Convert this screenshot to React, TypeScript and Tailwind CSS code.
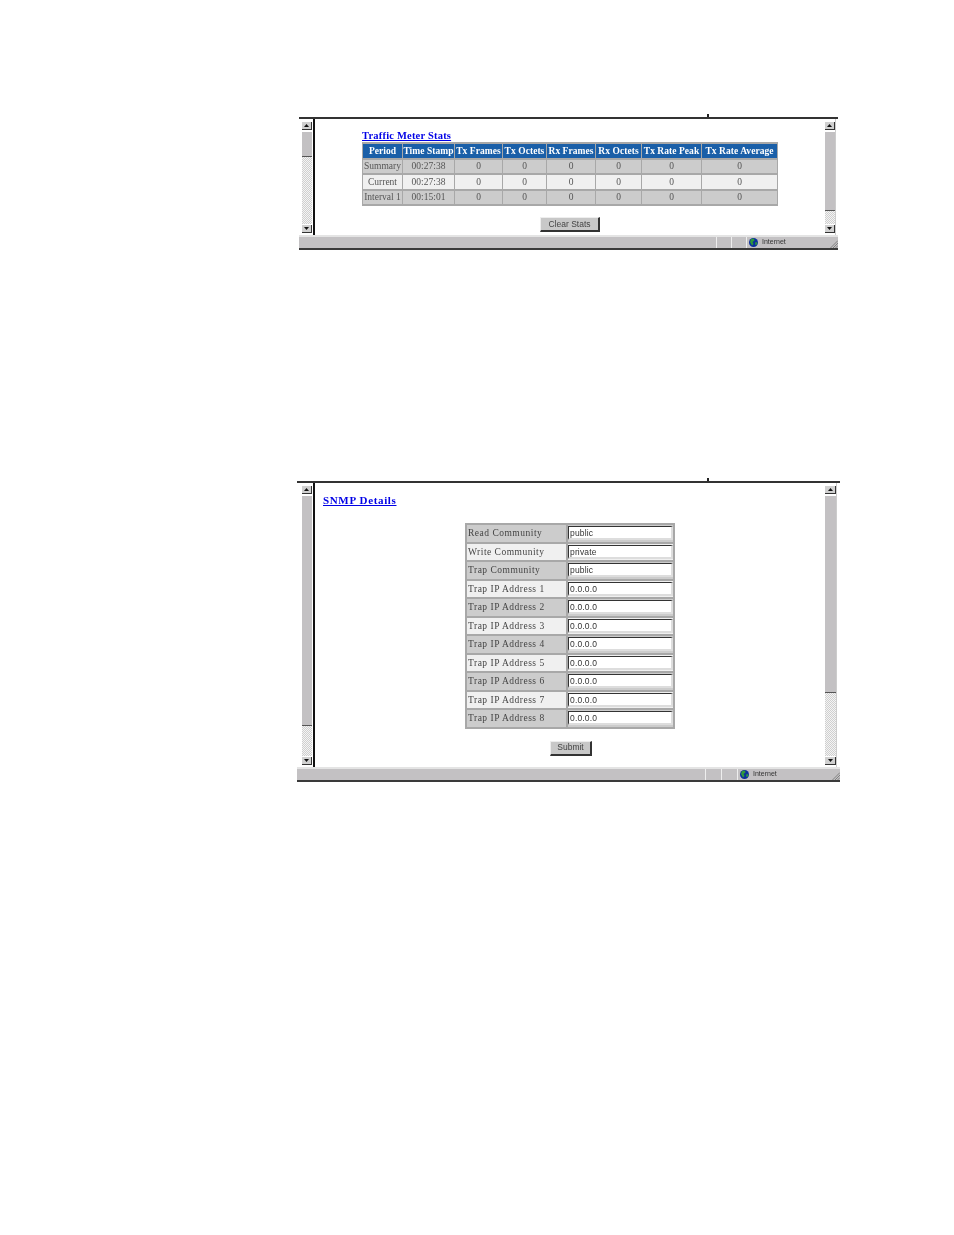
const headers = [
  ['Period', 'w-[40px]'],
  ['Time Stamp', 'w-[52px]'],
  ['Tx Frames', 'w-[48px]'],
  ['Tx Octets', 'w-[44px]'],
  ['Rx Frames', 'w-[49px]'],
  ['Rx Octets', 'w-[46px]'],
  ['Tx Rate Peak', 'w-[60px]'],
  ['Tx Rate Average', 'w-[76px]'],
];

const meterRows = [
  ['Summary', '00:27:38'],
  ['Current', '00:27:38'],
  ['Interval 1', '00:15:01'],
];

const snmpRows = [
  ['Read Community', 'public'],
  ['Write Community', 'private'],
  ['Trap Community', 'public'],
  ['Trap IP Address 1', '0.0.0.0'],
  ['Trap IP Address 2', '0.0.0.0'],
  ['Trap IP Address 3', '0.0.0.0'],
  ['Trap IP Address 4', '0.0.0.0'],
  ['Trap IP Address 5', '0.0.0.0'],
  ['Trap IP Address 6', '0.0.0.0'],
  ['Trap IP Address 7', '0.0.0.0'],
  ['Trap IP Address 8', '0.0.0.0'],
];

function Arrow({ up }: { up?: boolean }) {
  return (
    <div className="h-[8px] w-full shrink-0 bg-[#d0d0d0] border-b border-r border-[#333] flex items-center justify-center">
      <svg width="5" height="3" viewBox="0 0 5 3">
        <path d={up ? 'M2.5 0L5 3H0Z' : 'M0 0H5L2.5 3Z'} fill="#111" />
      </svg>
    </div>
  );
}

function Scrollbar({ thumb, className }: { thumb: string; className: string }) {
  return (
    <div className={`flex flex-col shrink-0 pt-[3px] pb-[2px] ${className}`}>
      <Arrow up />
      <div className="flex-1 flex flex-col mt-[2px] mb-[1px] bg-[repeating-conic-gradient(#cfcfcf_0_25%,#f4f4f4_0_50%)] bg-[length:2px_2px]">
        <div className={`bg-[#c3c1c3] border-b border-[#555] ${thumb}`} />
      </div>
      <Arrow />
    </div>
  );
}

function Globe() {
  return (
    <svg width="9" height="9" viewBox="0 0 9 9" className="shrink-0">
      <circle cx="4.5" cy="4.5" r="4.5" fill="#0b2f9c" />
      <path d="M2 1L5 0.5 5.5 2.5 3.5 4 4.5 6 3 7.5 1 4Z" fill="#2f9a3a" />
      <path d="M6.5 4L8.5 4.5 7.5 7 6 6.5Z" fill="#2f9a3a" />
    </svg>
  );
}

function Grip() {
  return (
    <svg width="8" height="8" viewBox="0 0 8 8" className="self-end shrink-0">
      <path d="M0.5 8L8 0.5M3 8L8 3M5.5 8L8 5.5" stroke="#808080" strokeWidth="1" fill="none" />
    </svg>
  );
}

function StatusBar({ first, second, gap }: { first: string; second: string; gap: string }) {
  return (
    <div className="h-[15px] shrink-0 flex flex-col">
      <div className="h-[2px] bg-[#e4e4e4]" />
      <div className="flex-1 bg-[#c3c1c3] flex items-stretch">
        <div className="flex-1" />
        <div className={`border-l border-r border-[#eeeeee] ${first}`} />
        <div className={`border-r border-[#eeeeee] ml-[1px] ${second}`} />
        <div className={`flex items-center font-['Liberation_Sans',sans-serif] text-[7px] text-[#333] ${gap}`}>
          <Globe />
          <span className="ml-[4px]">Internet</span>
        </div>
        <Grip />
      </div>
      <div className="h-[2px] bg-[#3a3a3a]" />
    </div>
  );
}

function PlainButton({ label, className }: { label: string; className: string }) {
  return (
    <div
      className={`flex items-center justify-center bg-[#c8c8c8] border-t border-l border-t-[#eeeeee] border-l-[#eeeeee] border-r-2 border-b-2 border-r-[#333] border-b-[#333] font-['Liberation_Sans',sans-serif] text-[8.5px] text-[#444] ${className}`}
    >
      {label}
    </div>
  );
}

function MeterStats() {
  return (
    <div className="pl-[47px] pt-[10px]">
      <div className="font-['Liberation_Serif',serif] font-bold text-[10.5px] leading-[13px] text-[#0000e6] underline tracking-[0.2px]">
        Traffic Meter Stats
      </div>
      <table className="border-collapse table-fixed w-[415px] border border-[#a8a8a8] font-['Liberation_Serif',serif] text-[9.5px] leading-[11px]">
        <thead>
          <tr className="h-[16px]">
            {headers.map(([name, w]) => (
              <th key={name} className={`${w} p-0 bg-[#1a5fa8] border-x border-y-2 border-[#a8a8a8] text-white font-bold tracking-[0.05px] whitespace-nowrap`}>
                {name}
              </th>
            ))}
          </tr>
        </thead>
        <tbody>
          {meterRows.map(([period, stamp], i) => (
            <tr key={period} className={`h-[15.4px] text-[#555] ${i === 1 ? 'bg-[#f0f0f0]' : 'bg-[#cccccc]'}`}>
              <td className="p-0 border-x border-y-2 border-[#a8a8a8] text-center whitespace-nowrap">{period}</td>
              <td className="p-0 border-x border-y-2 border-[#a8a8a8] text-center">{stamp}</td>
              {headers.slice(2).map(([name]) => (
                <td key={name} className="p-0 border-x border-y-2 border-[#a8a8a8] text-center">0</td>
              ))}
            </tr>
          ))}
        </tbody>
      </table>
      <PlainButton label="Clear Stats" className="w-[60px] h-[15px] mt-[11px] ml-[178px]" />
    </div>
  );
}

function SnmpDetails() {
  return (
    <div className="pt-[10px]">
      <div className="pl-[8px] font-['Liberation_Serif',serif] font-bold text-[11px] leading-[14px] text-[#0000e6] underline tracking-[0.65px]">
        SNMP Details
      </div>
      <table className="ml-[150px] mt-[16px] border-collapse table-fixed w-[210px] border-2 border-[#a8a8a8] font-['Liberation_Serif',serif] text-[9.5px] leading-[12px] tracking-[0.5px] text-[#444]">
        <tbody>
          {snmpRows.map(([label, value], i) => (
            <tr key={label} className={`h-[18.5px] ${i % 2 === 1 ? 'bg-[#f0f0f0]' : 'bg-[#cccccc]'}`}>
              <td className="w-[101px] p-0 pl-[1px] border-y-2 border-r-2 border-[#a8a8a8] whitespace-nowrap">{label}</td>
              <td className="p-0 border-y-2 border-[#a8a8a8]">
                <div className="w-[105px] h-[14px] bg-white border-t border-l border-t-[#333] border-l-[#333] border-r-2 border-b-2 border-r-[#dddddd] border-b-[#dddddd] pl-[1px] font-['Liberation_Sans',sans-serif] text-[8.5px] leading-[12px] tracking-[0.15px] text-[#333]">
                  {value}
                </div>
              </td>
            </tr>
          ))}
        </tbody>
      </table>
      <PlainButton label="Submit" className="w-[42px] h-[15px] mt-[12px] ml-[235px]" />
    </div>
  );
}

export default function App() {
  return (
    <div className="w-[954px] h-[1235px] bg-white overflow-hidden pt-[117px]">
      <div className="relative ml-[299px] w-[539px] h-[133px] flex flex-col blur-[0.3px]">
        <div className="absolute -top-[3px] right-[129px] w-[2px] h-[3px] bg-[#222]" />
        <div className="h-[2px] shrink-0 bg-[#333]" />
        <div className="flex-1 flex min-h-0">
          <div className="w-[3px] shrink-0" />
          <Scrollbar thumb="h-[25px]" className="w-[10px]" />
          <div className="w-[2px] shrink-0 ml-[1px] bg-[#111]" />
          <div className="flex-1 bg-white min-w-0">
            <MeterStats />
          </div>
          <Scrollbar thumb="h-[79px]" className="w-[10px]" />
          <div className="w-[3px] shrink-0 border-l border-[#cccccc]" />
        </div>
        <StatusBar first="w-[16px]" second="w-[14px]" gap="w-[83px] pl-[2px]" />
      </div>

      <div className="relative mt-[231px] ml-[297px] w-[543px] h-[301px] flex flex-col blur-[0.3px]">
        <div className="absolute -top-[3px] right-[131px] w-[2px] h-[3px] bg-[#222]" />
        <div className="h-[2px] shrink-0 bg-[#333]" />
        <div className="flex-1 flex min-h-0">
          <div className="w-[5px] shrink-0" />
          <Scrollbar thumb="h-[230px]" className="w-[10px]" />
          <div className="w-[2px] shrink-0 ml-[1px] bg-[#111]" />
          <div className="flex-1 bg-white min-w-0">
            <SnmpDetails />
          </div>
          <Scrollbar thumb="h-[197px]" className="w-[11px]" />
          <div className="w-[4px] shrink-0 border-l border-[#cccccc]" />
        </div>
        <StatusBar first="w-[17px]" second="w-[15px]" gap="w-[94px] pl-[2px]" />
      </div>
    </div>
  );
}
